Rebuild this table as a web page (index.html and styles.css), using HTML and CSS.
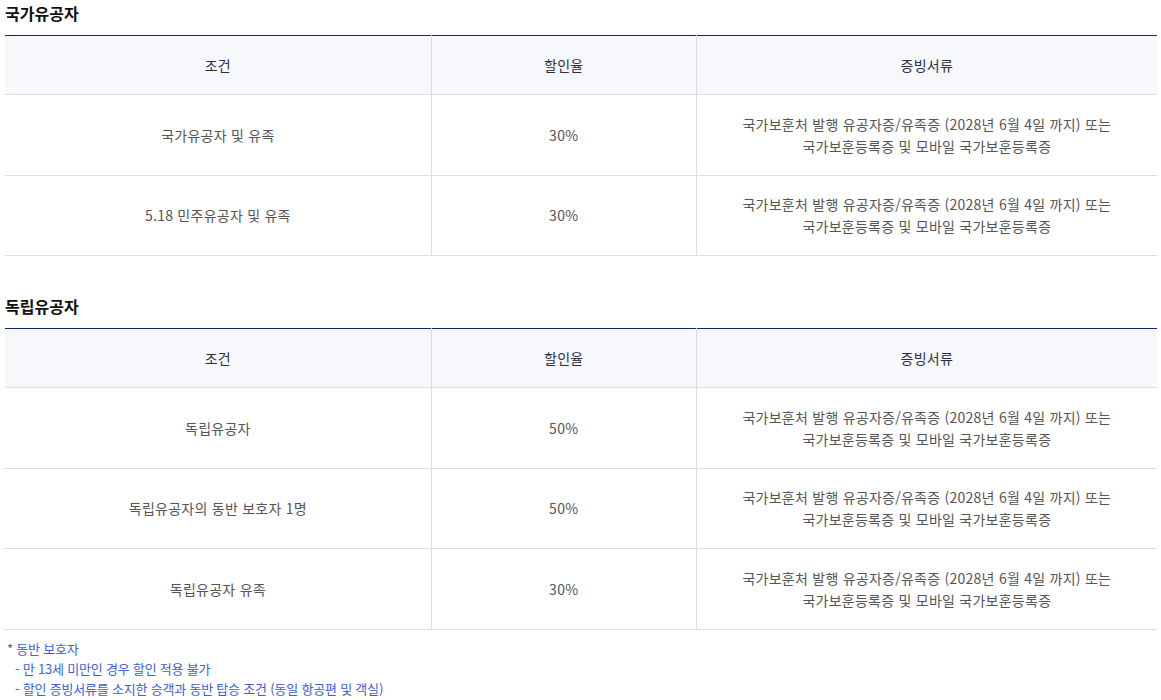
FILE: index.html
```html
<!DOCTYPE html>
<html lang="ko">
<head>
<meta charset="utf-8">
<link rel="stylesheet" href="styles.css">
</head>
<body>
<div class="page">
  <section class="section">
    <h3 class="title">국가유공자</h3>
    <table class="tbl">
      <colgroup><col class="c1"><col class="c2"><col class="c3"></colgroup>
      <thead>
        <tr><th>조건</th><th>할인율</th><th>증빙서류</th></tr>
      </thead>
      <tbody>
        <tr><td>국가유공자 및 유족</td><td>30%</td><td>국가보훈처 발행 유공자증/유족증 (2028년 6월 4일 까지) 또는<br>국가보훈등록증 및 모바일 국가보훈등록증</td></tr>
        <tr><td>5.18 민주유공자 및 유족</td><td>30%</td><td>국가보훈처 발행 유공자증/유족증 (2028년 6월 4일 까지) 또는<br>국가보훈등록증 및 모바일 국가보훈등록증</td></tr>
      </tbody>
    </table>
  </section>
  <section class="section">
    <h3 class="title">독립유공자</h3>
    <table class="tbl">
      <colgroup><col class="c1"><col class="c2"><col class="c3"></colgroup>
      <thead>
        <tr><th>조건</th><th>할인율</th><th>증빙서류</th></tr>
      </thead>
      <tbody>
        <tr><td>독립유공자</td><td>50%</td><td>국가보훈처 발행 유공자증/유족증 (2028년 6월 4일 까지) 또는<br>국가보훈등록증 및 모바일 국가보훈등록증</td></tr>
        <tr><td>독립유공자의 동반 보호자 1명</td><td>50%</td><td>국가보훈처 발행 유공자증/유족증 (2028년 6월 4일 까지) 또는<br>국가보훈등록증 및 모바일 국가보훈등록증</td></tr>
        <tr><td>독립유공자 유족</td><td>30%</td><td>국가보훈처 발행 유공자증/유족증 (2028년 6월 4일 까지) 또는<br>국가보훈등록증 및 모바일 국가보훈등록증</td></tr>
      </tbody>
    </table>
    <ul class="notes">
      <li class="note-head">* 동반 보호자</li>
      <li class="note-sub">- 만 13세 미만인 경우 할인 적용 불가</li>
      <li class="note-sub">- 할인 증빙서류를 소지한 승객과 동반 탑승 조건 (동일 항공편 및 객실)</li>
    </ul>
  </section>
</div>
</body>
</html>
```

FILE: styles.css
```css
html, body {
  margin: 0;
  padding: 0;
  background: #fff;
}
body {
  font-family: "Noto Sans CJK KR", "Noto Sans", sans-serif;
  color: #555;
}
.page {
  padding: 1px 4px 0 5px;
}
.section + .section {
  margin-top: 38px;
}
.title {
  margin: 0 0 10px;
  font-size: 16px;
  line-height: 24px;
  font-weight: 700;
  color: #111;
}
.tbl {
  width: 100%;
  border-collapse: collapse;
  border-top: 1px solid #0b2a6a;
  table-layout: fixed;
  font-size: 14px;
  line-height: 22px;
  letter-spacing: 0.25px;
}
.c1 { width: 37%; }
.c2 { width: 23%; }
.c3 { width: 40%; }
.tbl th {
  background: #f7f8fc;
  font-weight: 400;
  color: #2b2f3d;
  height: 58px;
  padding: 0;
  border-bottom: 1px solid #ddd;
  border-left: 1px solid #ddd;
  text-align: center;
  vertical-align: middle;
}
.tbl td {
  padding: 17.75px 10px;
  border-bottom: 1px solid #ddd;
  border-left: 1px solid #ddd;
  text-align: center;
  vertical-align: middle;
  color: #555;
}
.tbl th:first-child,
.tbl td:first-child {
  border-left: none;
}
.notes {
  list-style: none;
  margin: 9px 0 0;
  padding: 0;
  font-size: 13px;
  line-height: 20px;
  letter-spacing: -0.2px;
  color: #3f5fd6;
}
.note-head {
  padding-left: 2px;
}
.note-sub {
  padding-left: 10px;
}
```
